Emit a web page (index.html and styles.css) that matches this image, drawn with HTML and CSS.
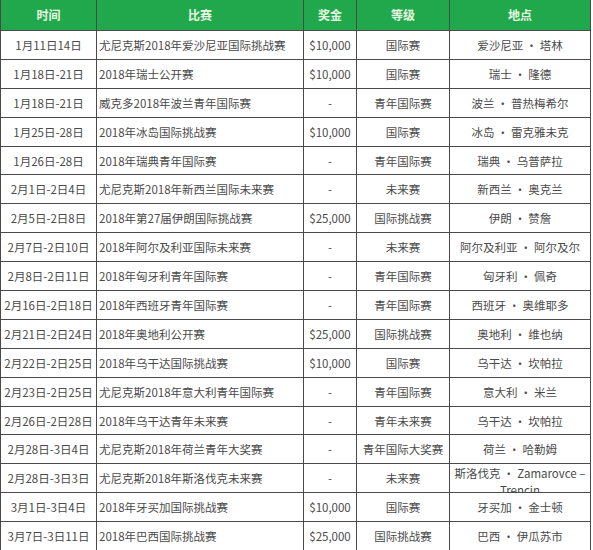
FILE: index.html
```html
<!DOCTYPE html>
<html lang="zh-CN">
<head>
<meta charset="utf-8">
<title>赛程</title>
<link rel="stylesheet" href="styles.css">
</head>
<body>
<div class="sheet">
  <div class="row head">
    <div class="c">时间</div><div class="c">比赛</div><div class="c">奖金</div><div class="c">等级</div><div class="c">地点</div>
  </div>
  <div class="row"><div class="c">1月11日14日</div><div class="c name">尤尼克斯2018年爱沙尼亚国际挑战赛</div><div class="c">$10,000</div><div class="c">国际赛</div><div class="c">爱沙尼亚 · 塔林</div></div>
  <div class="row"><div class="c">1月18日-21日</div><div class="c name">2018年瑞士公开赛</div><div class="c">$10,000</div><div class="c">国际赛</div><div class="c">瑞士 · 隆德</div></div>
  <div class="row"><div class="c">1月18日-21日</div><div class="c name">威克多2018年波兰青年国际赛</div><div class="c">-</div><div class="c">青年国际赛</div><div class="c">波兰 · 普热梅希尔</div></div>
  <div class="row"><div class="c">1月25日-28日</div><div class="c name">2018年冰岛国际挑战赛</div><div class="c">$10,000</div><div class="c">国际赛</div><div class="c">冰岛 · 雷克雅未克</div></div>
  <div class="row"><div class="c">1月26日-28日</div><div class="c name">2018年瑞典青年国际赛</div><div class="c">-</div><div class="c">青年国际赛</div><div class="c">瑞典 · 乌普萨拉</div></div>
  <div class="row"><div class="c">2月1日-2日4日</div><div class="c name">尤尼克斯2018年新西兰国际未来赛</div><div class="c">-</div><div class="c">未来赛</div><div class="c">新西兰 · 奥克兰</div></div>
  <div class="row"><div class="c">2月5日-2日8日</div><div class="c name">2018年第27届伊朗国际挑战赛</div><div class="c">$25,000</div><div class="c">国际挑战赛</div><div class="c">伊朗 · 赞詹</div></div>
  <div class="row"><div class="c">2月7日-2日10日</div><div class="c name">2018年阿尔及利亚国际未来赛</div><div class="c">-</div><div class="c">未来赛</div><div class="c">阿尔及利亚 · 阿尔及尔</div></div>
  <div class="row"><div class="c">2月8日-2日11日</div><div class="c name">2018年匈牙利青年国际赛</div><div class="c">-</div><div class="c">青年国际赛</div><div class="c">匈牙利 · 佩奇</div></div>
  <div class="row"><div class="c">2月16日-2日18日</div><div class="c name">2018年西班牙青年国际赛</div><div class="c">-</div><div class="c">青年国际赛</div><div class="c">西班牙 · 奥维耶多</div></div>
  <div class="row"><div class="c">2月21日-2日24日</div><div class="c name">2018年奥地利公开赛</div><div class="c">$25,000</div><div class="c">国际挑战赛</div><div class="c">奥地利 · 维也纳</div></div>
  <div class="row"><div class="c">2月22日-2日25日</div><div class="c name">2018年乌干达国际挑战赛</div><div class="c">$10,000</div><div class="c">国际赛</div><div class="c">乌干达 · 坎帕拉</div></div>
  <div class="row"><div class="c">2月23日-2日25日</div><div class="c name">尤尼克斯2018年意大利青年国际赛</div><div class="c">-</div><div class="c">青年国际赛</div><div class="c">意大利 · 米兰</div></div>
  <div class="row"><div class="c">2月26日-2日28日</div><div class="c name">2018年乌干达青年未来赛</div><div class="c">-</div><div class="c">青年未来赛</div><div class="c">乌干达 · 坎帕拉</div></div>
  <div class="row"><div class="c">2月28日-3日4日</div><div class="c name">尤尼克斯2018年荷兰青年大奖赛</div><div class="c">-</div><div class="c">青年国际大奖赛</div><div class="c">荷兰 · 哈勒姆</div></div>
  <div class="row"><div class="c">2月28日-3日3日</div><div class="c name">尤尼克斯2018年斯洛伐克未来赛</div><div class="c">-</div><div class="c">未来赛</div><div class="c wrap">斯洛伐克 · Zamarovce – Trencin</div></div>
  <div class="row"><div class="c">3月1日-3日4日</div><div class="c name">2018年牙买加国际挑战赛</div><div class="c">$10,000</div><div class="c">国际赛</div><div class="c">牙买加 · 金士顿</div></div>
  <div class="row"><div class="c">3月7日-3日11日</div><div class="c name">2018年巴西国际挑战赛</div><div class="c">$25,000</div><div class="c">国际挑战赛</div><div class="c">巴西 · 伊瓜苏市</div></div>
</div>
</body>
</html>
```
FILE: styles.css
```css
html, body {
  margin: 0;
  padding: 0;
  background: #ffffff;
}
body {
  font-family: "Noto Sans CJK SC", "Noto Sans", sans-serif;
  font-size: 11.5px;
  color: #4a4a4a;
}
.sheet {
  display: grid;
  grid-template-columns: 95px 206px 52px 92px 140px;
  grid-template-rows: 30px repeat(18, 27.9px);
  gap: 1px;
  width: max-content;
  padding: 0 1px;
  background: #4a4a4a;
  height: 560px;
  align-content: start;
}
.row {
  display: contents;
}
.c {
  background: #ffffff;
  display: flex;
  align-items: center;
  justify-content: center;
  white-space: nowrap;
  overflow: hidden;
  line-height: 16px;
}
.head .c {
  background: #21a84c;
  color: #e6f7e2;
  font-weight: bold;
  font-size: 12px;
}
.c.name {
  justify-content: flex-start;
  padding-left: 2px;
}
.c.wrap {
  white-space: normal;
  text-align: center;
  align-items: flex-start;
  padding: 1px 4px 0;
  line-height: 17px;
}
```
